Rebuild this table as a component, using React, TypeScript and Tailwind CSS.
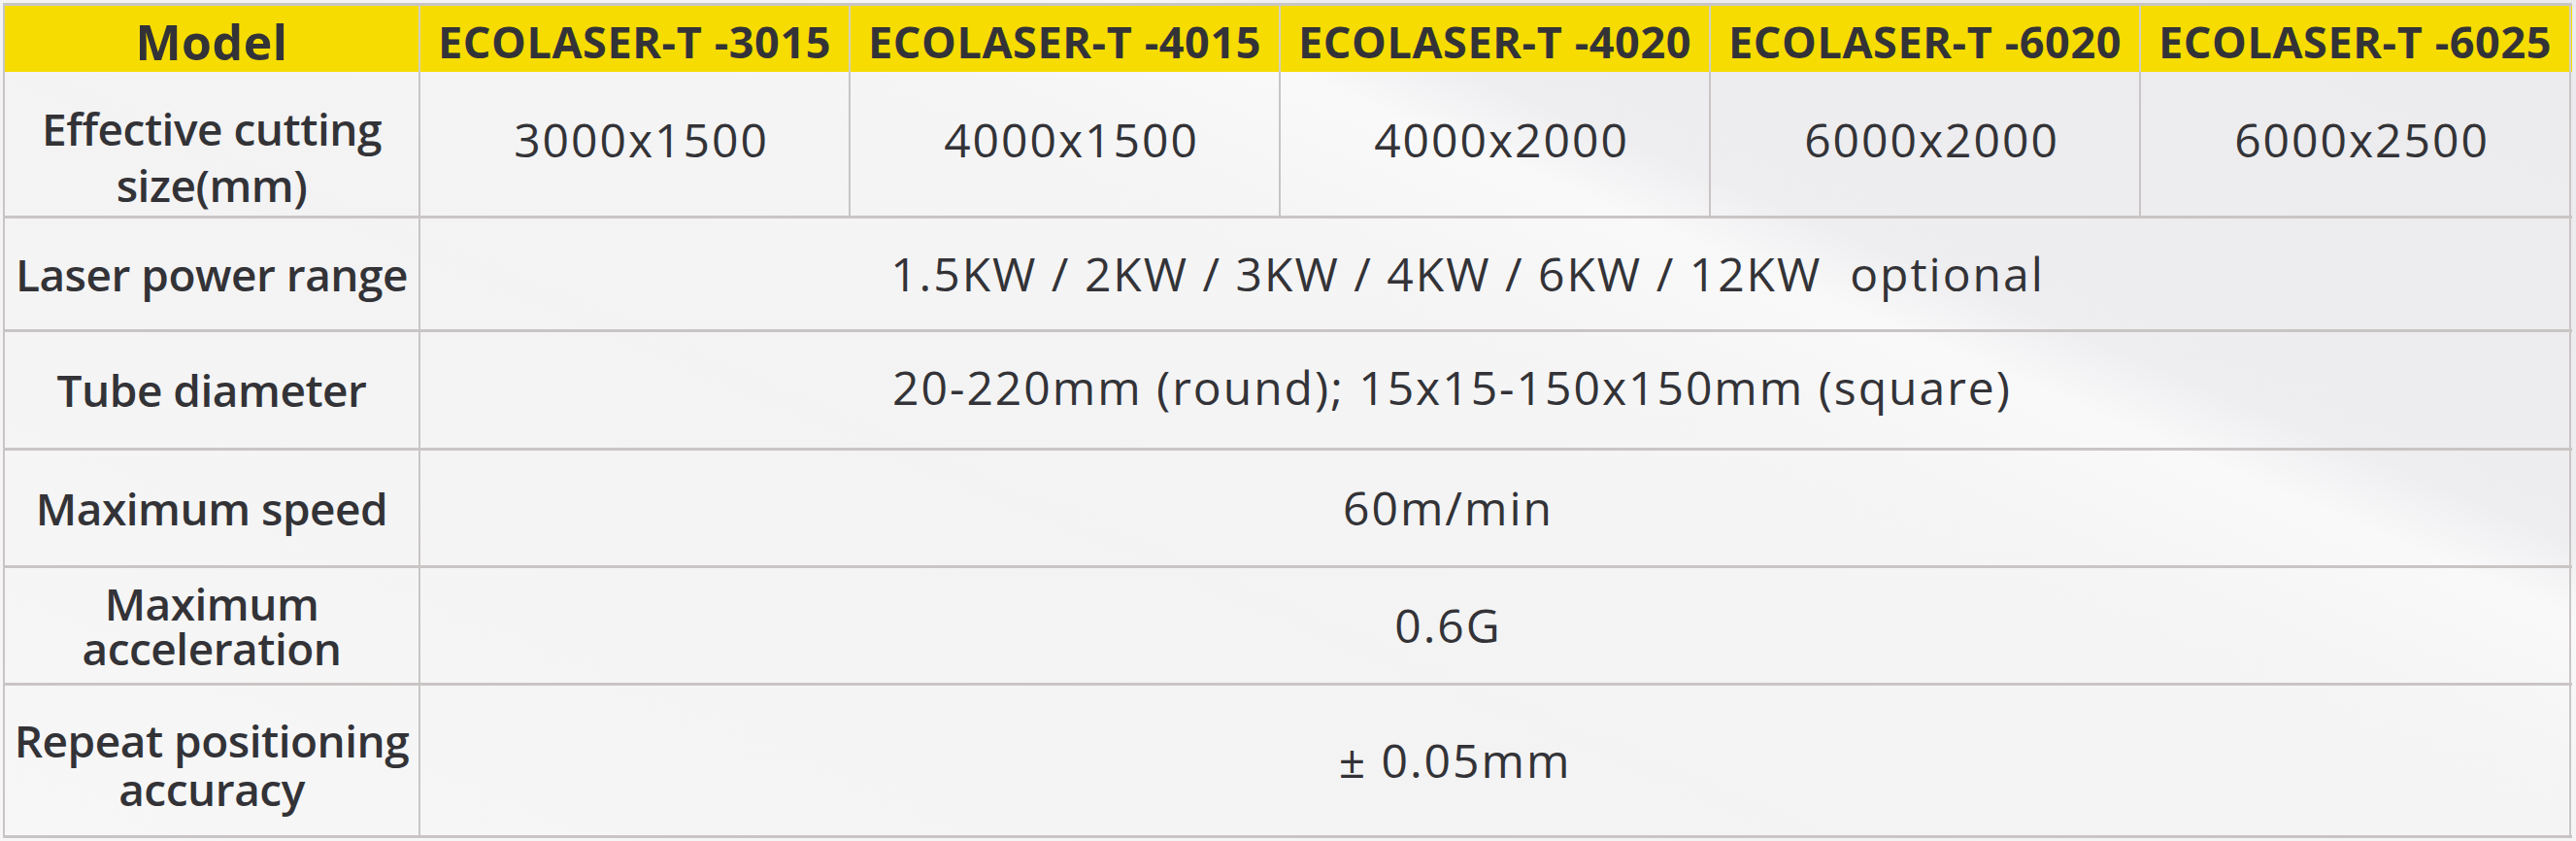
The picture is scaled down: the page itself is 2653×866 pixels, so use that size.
import { FC, ReactNode } from "react";

const models = [
  "ECOLASER-T -3015",
  "ECOLASER-T -4015",
  "ECOLASER-T -4020",
  "ECOLASER-T -6020",
  "ECOLASER-T -6025",
];

const sizes = ["3000x1500", "4000x1500", "4000x2000", "6000x2000", "6000x2500"];

type Spec = {
  label: ReactNode;
  value: string;
  rowClass: string;
  valueClass: string;
};

const specs: Spec[] = [
  {
    label: "Laser power range",
    value: "1.5KW / 2KW / 3KW / 4KW / 6KW / 12KW  optional",
    rowClass: "h-[117px]",
    valueClass: "pr-[56px]",
  },
  {
    label: "Tube diameter",
    value: "20-220mm (round); 15x15-150x150mm (square)",
    rowClass: "h-[122px]",
    valueClass: "pr-[88px] pb-[6px]",
  },
  {
    label: "Maximum speed",
    value: "60m/min",
    rowClass: "h-[121px]",
    valueClass: "pr-[96px]",
  },
  {
    label: (
      <span className="block leading-[46px]">
        Maximum
        <br />
        acceleration
      </span>
    ),
    value: "0.6G",
    rowClass: "h-[121px]",
    valueClass: "pr-[96px]",
  },
  {
    label: (
      <span className="block pt-[8px] leading-[50px]">
        Repeat positioning
        <br />
        accuracy
      </span>
    ),
    value: "± 0.05mm",
    rowClass: "h-[157px]",
    valueClass: "pr-[82px]",
  },
];

const LabelCell: FC<{ children: ReactNode; className?: string }> = ({
  children,
  className = "",
}) => (
  <div
    className={`flex items-center justify-center border-r-2 border-[#c9c5c5] text-center text-[46px] font-semibold tracking-[-0.5px] text-[#333337] ${className}`}
  >
    {children}
  </div>
);

const App: FC = () => {
  return (
    <div className="h-[866px] w-full overflow-hidden bg-[#efeef0] bg-[linear-gradient(23deg,#f7f7f7_0%,#f3f3f4_40%,#f5f5f6_60%,#f9f9fa_68%,#eeedef_72%,#ebeaec_100%)] pl-[3px] pt-[3px] font-['Open_Sans',sans-serif]">
      <div className="w-[2646px] border-l-2 border-t-[3px] border-[#c9c5c5]">
        {/* header */}
        <div className="grid h-[68px] grid-cols-[428px_repeat(5,443px)] bg-[#f6dc00] text-[#333337]">
          <div className="flex items-center justify-center border-r-2 border-[#d3cfc4] text-[50px] font-bold tracking-[0.5px]">
            Model
          </div>
          {models.map((m) => (
            <div
              key={m}
              className="flex items-center justify-center whitespace-nowrap border-r-2 border-[#d3cfc4] pb-[2px] text-[45px] font-bold tracking-[0.6px]"
            >
              {m}
            </div>
          ))}
        </div>

        {/* sizes */}
        <div className="grid h-[151px] grid-cols-[428px_repeat(5,443px)] border-b-[3px] border-[#c9c5c5]">
          <LabelCell className="pt-[26px] leading-[58px]">
            <span className="block">
              Effective cutting
              <br />
              size(mm)
            </span>
          </LabelCell>
          {sizes.map((s) => (
            <div
              key={s}
              className="flex items-center justify-center border-r-2 border-[#c9c5c5] pb-[8px] pl-[14px] text-[48px] tracking-[2px] text-[#333337]"
            >
              {s}
            </div>
          ))}
        </div>

        {specs.map((spec, i) => (
          <div
            key={i}
            className={`grid grid-cols-[428px_repeat(5,443px)] border-b-[3px] border-[#c9c5c5] ${spec.rowClass}`}
          >
            <LabelCell>{spec.label}</LabelCell>
            <div
              className={`col-span-5 flex items-center justify-center whitespace-pre border-r-2 border-[#c9c5c5] text-[48px] tracking-[2px] text-[#333337] ${spec.valueClass}`}
            >
              {spec.value}
            </div>
          </div>
        ))}
      </div>
    </div>
  );
};

export default App;
